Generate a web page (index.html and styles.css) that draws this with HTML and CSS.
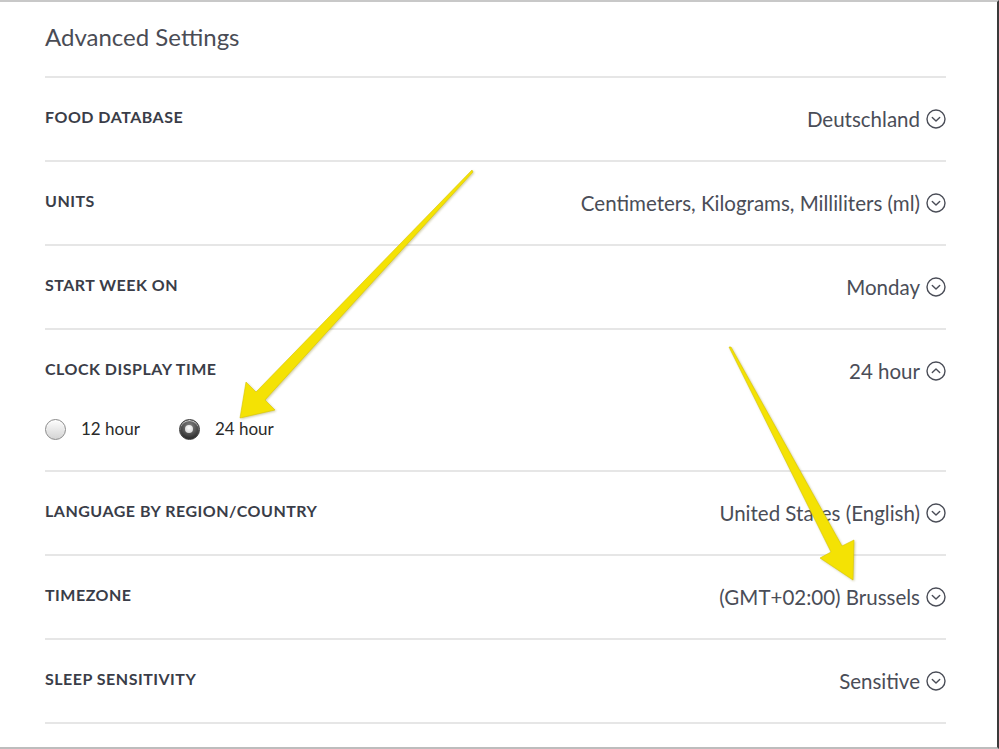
FILE: index.html
```html
<!DOCTYPE html>
<html>
<head>
<meta charset="utf-8">
<link rel="stylesheet" href="styles.css">
</head>
<body>
<div class="page">
  <div class="content">
    <header class="title">Advanced Settings</header>

    <div class="row">
      <div class="label">Food Database</div>
      <div class="value">Deutschland <svg class="chev" viewBox="0 0 20 20"><circle cx="10" cy="10" r="9" /><path d="M6.3 8.4 L10 12 L13.7 8.4" /></svg></div>
    </div>

    <div class="row">
      <div class="label">Units</div>
      <div class="value">Centimeters, Kilograms, Milliliters (ml) <svg class="chev" viewBox="0 0 20 20"><circle cx="10" cy="10" r="9" /><path d="M6.3 8.4 L10 12 L13.7 8.4" /></svg></div>
    </div>

    <div class="row">
      <div class="label">Start Week On</div>
      <div class="value">Monday <svg class="chev" viewBox="0 0 20 20"><circle cx="10" cy="10" r="9" /><path d="M6.3 8.4 L10 12 L13.7 8.4" /></svg></div>
    </div>

    <div class="row row-open">
      <div class="row-head">
        <div class="label">Clock Display Time</div>
        <div class="value">24 hour <svg class="chev" viewBox="0 0 20 20"><circle cx="10" cy="10" r="9" /><path d="M6.3 11.6 L10 8 L13.7 11.6" /></svg></div>
      </div>
      <div class="radios">
        <label class="radio"><span class="dot"></span>12 hour</label>
        <label class="radio"><span class="dot on"></span>24 hour</label>
      </div>
    </div>

    <div class="row">
      <div class="label">Language by Region/Country</div>
      <div class="value">United States (English) <svg class="chev" viewBox="0 0 20 20"><circle cx="10" cy="10" r="9" /><path d="M6.3 8.4 L10 12 L13.7 8.4" /></svg></div>
    </div>

    <div class="row">
      <div class="label">Timezone</div>
      <div class="value">(GMT+02:00) Brussels <svg class="chev" viewBox="0 0 20 20"><circle cx="10" cy="10" r="9" /><path d="M6.3 8.4 L10 12 L13.7 8.4" /></svg></div>
    </div>

    <div class="row">
      <div class="label">Sleep Sensitivity</div>
      <div class="value">Sensitive <svg class="chev" viewBox="0 0 20 20"><circle cx="10" cy="10" r="9" /><path d="M6.3 8.4 L10 12 L13.7 8.4" /></svg></div>
    </div>
  </div>

  <svg class="arrows" viewBox="0 0 999 749" width="999" height="749">
    <polygon points="472,170 473,172 265,400 275,410 240,418 246,382 256,392" />
    <polygon points="729,347 731,347 842,546 854,540 853,580 820,558 831,552" />
  </svg>
</div>
</body>
</html>
```

FILE: styles.css
```css
* { box-sizing: border-box; }
html, body { margin: 0; padding: 0; background: #fff; }
body { font-family: "Lato", "Open Sans", sans-serif; color: #3d404b; }

.page {
  position: relative;
  width: 999px;
  height: 749px;
  border-top: 2px solid #c8c8c8;
  border-right: 2px solid #3a3a3a;
  border-bottom: 2px solid #bdbdbd;
  overflow: hidden;
}

.content {
  width: 901px;
  margin-left: 45px;
}

.title {
  height: 76px;
  display: flex;
  align-items: center;
  padding-bottom: 6px;
  font-size: 24px;
  color: #4a4c55;
  border-bottom: 2px solid #e6e6e6;
}

.row {
  height: 84px;
  display: flex;
  justify-content: space-between;
  align-items: flex-start;
  border-bottom: 2px solid #e6e6e6;
}

.row-open {
  height: 142px;
  flex-direction: column;
  justify-content: flex-start;
}

.row-head {
  width: 100%;
  display: flex;
  justify-content: space-between;
  align-items: flex-start;
}

.label {
  margin-top: 29px;
  line-height: 20px;
  font-size: 16px;
  font-weight: 700;
  text-transform: uppercase;
  letter-spacing: 0.5px;
  color: #3a3d48;
}

.value {
  margin-top: 29px;
  line-height: 24px;
  font-size: 20.5px;
  color: #4a4d57;
  display: flex;
  align-items: center;
  gap: 6px;
}

.chev {
  width: 20px;
  height: 20px;
  fill: none;
  stroke: #4a4d57;
  stroke-width: 1.4;
  stroke-linecap: round;
  stroke-linejoin: round;
}

.radios {
  display: flex;
  gap: 39px;
  margin-top: 35px;
}

.radio {
  display: flex;
  align-items: center;
  gap: 15px;
  font-size: 17px;
  color: #2a2a2a;
  line-height: 22px;
}

.dot {
  width: 21px;
  height: 21px;
  border-radius: 50%;
  border: 1px solid #8a8a8a;
  background: linear-gradient(#fdfdfd, #d4d4d4);
  box-shadow: inset 0 1px 1px rgba(255,255,255,0.8);
  display: flex;
  align-items: center;
  justify-content: center;
}

.dot.on {
  border-color: #3a3a3a;
  background: radial-gradient(circle at 50% 35%, #8a8a8a, #2e2e2e 75%);
}

.dot.on::after {
  content: "";
  width: 8px;
  height: 8px;
  border-radius: 50%;
  background: radial-gradient(circle at 50% 35%, #ffffff, #c9c9c9);
}

.arrows {
  position: absolute;
  left: 0;
  top: -2px;
  pointer-events: none;
}

.arrows polygon {
  fill: #f4e204;
  stroke: #d8c600;
  stroke-width: 0.6;
  stroke-linejoin: round;
  filter: drop-shadow(1px 1px 1px rgba(120,110,0,0.35));
}
```
